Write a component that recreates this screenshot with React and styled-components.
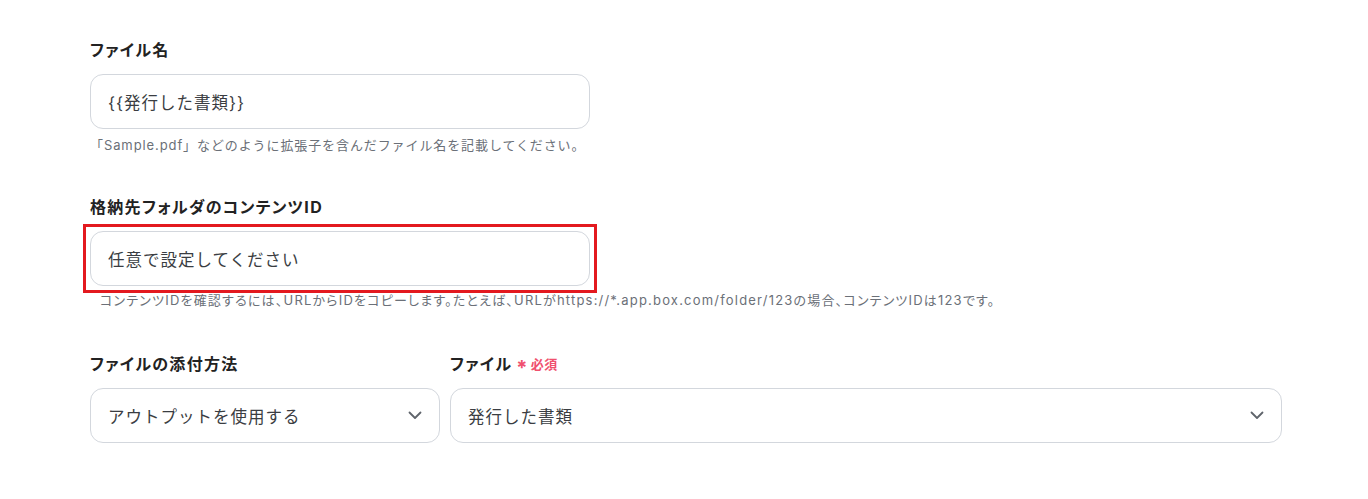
import React from "react";
import styled, { createGlobalStyle } from "styled-components";

const Global = createGlobalStyle`
  html, body { margin: 0; padding: 0; background: #ffffff; }
  body { font-family: "Inter", "Noto Sans CJK JP", sans-serif; }
  * { box-sizing: border-box; }
`;

const Page = styled.div`
  padding: 39px 0 0 90px;
  width: 1282px;
`;

const Field = styled.div`
  display: flex;
  flex-direction: column;
  width: ${(p) => p.$width || "100%"};
  margin-bottom: ${(p) => p.$mb || 0}px;
`;

const Label = styled.div`
  font-size: 16px;
  line-height: 22px;
  font-weight: 700;
  color: #222222;
  margin-bottom: 13px;
  display: flex;
  align-items: center;
  font-feature-settings: "palt";
  letter-spacing: 1.3px;
`;

const Star = styled.span`
  color: #f0506e;
  font-size: 20px;
  font-weight: 700;
  margin-left: 4px;
  line-height: 1;
  position: relative;
  top: 4px;
`;

const Required = styled.span`
  color: #f0506e;
  font-size: 13px;
  font-weight: 700;
  margin-left: 2px;
  letter-spacing: 0.5px;
`;

const InputBox = styled.div`
  height: 55px;
  border: 1px solid #d3d7dd;
  border-radius: 13px;
  display: flex;
  align-items: center;
  padding: 0 17px;
  font-size: 16.5px;
  letter-spacing: 1px;
  color: #3a3d42;
  background: #fff;
  justify-content: space-between;
`;

const Highlight = styled.div`
  position: relative;
  &::after {
    content: "";
    position: absolute;
    left: -7px;
    right: -7px;
    top: -7px;
    bottom: -7px;
    border: 3px solid #e3191f;
    pointer-events: none;
  }
`;

const Help = styled.div`
  font-size: 13px;
  line-height: 18px;
  color: #6b7078;
  margin-top: ${(p) => p.$mt}px;
  padding-left: ${(p) => p.$indent || 0}px;
  white-space: nowrap;
  font-feature-settings: ${(p) => (p.$wide ? "normal" : '"palt"')};
  letter-spacing: ${(p) => (p.$wide ? 0.9 : 1.2)}px;
`;

const Row = styled.div`
  display: flex;
  gap: 10px;
`;

const Chevron = () => (
  <svg width="14" height="9" viewBox="0 0 14 9" fill="none">
    <path d="M1.5 1.5 L7 7 L12.5 1.5" stroke="#5f646b" strokeWidth="1.8" strokeLinecap="round" strokeLinejoin="round" />
  </svg>
);

export default function App() {
  return (
    <>
      <Global />
      <Page>
        <Field $width="500px" $mb={42}>
          <Label>ファイル名</Label>
          <InputBox>{"{{発行した書類}}"}</InputBox>
          <Help $mt={7} $wide>「Sample.pdf」などのように拡張子を含んだファイル名を記載してください。</Help>
        </Field>
        <Field $width="500px" $mb={44}>
          <Label>格納先フォルダのコンテンツID</Label>
          <Highlight>
            <InputBox>任意で設定してください</InputBox>
          </Highlight>
          <Help $mt={5} $indent={10}>
            コンテンツIDを確認するには、URLからIDをコピーします。たとえば、URLがhttps://*.app.box.com/folder/123の場合、コンテンツIDは123です。
          </Help>
        </Field>
        <Row>
          <Field $width="350px">
            <Label>ファイルの添付方法</Label>
            <InputBox>
              アウトプットを使用する
              <Chevron />
            </InputBox>
          </Field>
          <Field $width="832px">
            <Label>
              ファイル<Star>*</Star><Required>必須</Required>
            </Label>
            <InputBox>
              発行した書類
              <Chevron />
            </InputBox>
          </Field>
        </Row>
      </Page>
    </>
  );
}
